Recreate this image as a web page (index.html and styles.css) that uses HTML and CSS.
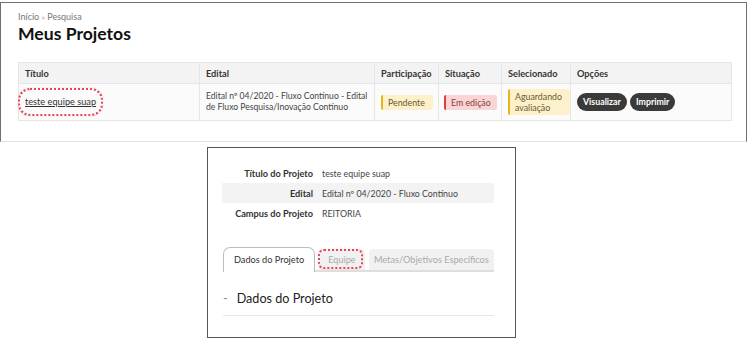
FILE: index.html
```html
<!DOCTYPE html>
<html lang="pt-BR">
<head>
    <meta charset="UTF-8">
    <meta name="viewport" content="width=device-width, initial-scale=1.0">
    <title>Meus Projetos</title>
    <link rel="stylesheet" href="styles.css">
</head>
<body>
    <div class="shot shot-list">
        <div class="breadcrumb">Início <span class="sep">»</span> Pesquisa</div>
        <h1>Meus Projetos</h1>

        <table class="projects">
            <colgroup>
                <col class="col-titulo">
                <col class="col-edital">
                <col class="col-part">
                <col class="col-sit">
                <col class="col-sel">
                <col class="col-opc">
            </colgroup>
            <thead>
                <tr>
                    <th>Título</th>
                    <th>Edital</th>
                    <th>Participação</th>
                    <th>Situação</th>
                    <th>Selecionado</th>
                    <th>Opções</th>
                </tr>
            </thead>
            <tbody>
                <tr>
                    <td class="cell-titulo">
                        <a href="#">teste equipe suap</a>
                        <span class="mark mark-titulo"></span>
                    </td>
                    <td>Edital nº 04/2020 - Fluxo Contínuo - Edital de Fluxo Pesquisa/Inovação Contínuo</td>
                    <td><span class="status alert">Pendente</span></td>
                    <td class="cell-sit"><span class="status error">Em edição</span></td>
                    <td><span class="status alert">Aguardando<br>avaliação</span></td>
                    <td class="cell-opc">
                        <a href="#" class="btn">Visualizar</a>
                        <a href="#" class="btn">Imprimir</a>
                    </td>
                </tr>
            </tbody>
        </table>
    </div>

    <div class="shot shot-detail">
        <dl class="info">
            <div class="info-row">
                <dt>Título do Projeto</dt>
                <dd>teste equipe suap</dd>
            </div>
            <div class="info-row">
                <dt>Edital</dt>
                <dd>Edital nº 04/2020 - Fluxo Contínuo</dd>
            </div>
            <div class="info-row">
                <dt>Campus do Projeto</dt>
                <dd>REITORIA</dd>
            </div>
        </dl>

        <ul class="tabs">
            <li class="tab active">Dados do Projeto</li>
            <li class="tab">Equipe<span class="mark mark-tab"></span></li>
            <li class="tab">Metas/Objetivos Específicos</li>
        </ul>

        <h3 class="section-title"><span class="dash">-</span>Dados do Projeto</h3>
    </div>
</body>
</html>
```

FILE: styles.css
```css
body {
    margin: 0;
    font-family: Lato, "Open Sans", Arial, sans-serif;
    background-color: #fff;
    color: #333;
}
.shot {
    box-sizing: border-box;
    border: 1px solid #707070;
    background-color: #fff;
}
.shot-list {
    width: 747px;
    height: 140px;
    margin-top: 2px;
    padding: 8px 0 0 17px;
    border-bottom-color: #e2e2e2;
}
.breadcrumb {
    font-size: 9px;
    line-height: 12px;
    color: #777;
}
.breadcrumb .sep {
    color: #aaa;
    font-size: 8px;
}
h1 {
    margin: 0;
    font-size: 17.6px;
    line-height: 22px;
    font-weight: 700;
    color: #111;
}
.projects {
    margin-top: 17px;
    width: 713px;
    border-collapse: collapse;
    table-layout: fixed;
    font-size: 8.6px;
}
.col-titulo { width: 181px; }
.col-edital { width: 175px; }
.col-part { width: 64px; }
.col-sit { width: 63px; }
.col-sel { width: 69px; }
.col-opc { width: 161px; }
.projects th,
.projects td {
    border: 1px solid #e6e6e6;
    text-align: left;
    padding: 0 2px 0 6px;
}
.projects th {
    background-color: #f3f3f3;
    height: 20px;
    font-size: 9.2px;
    font-weight: 700;
    color: #333;
}
.projects td {
    background-color: #fbfbfb;
    height: 36px;
    line-height: 11px;
    color: #444;
}
.projects td.cell-sit {
    padding-left: 5px;
}
.cell-titulo {
    position: relative;
}
.cell-titulo a {
    color: #333;
    font-size: 9.2px;
}
.cell-opc {
    white-space: nowrap;
}
.status {
    display: inline-block;
    padding: 2px 8px 2px 5px;
    border-left: 2px solid;
    border-radius: 2px;
    font-size: 8.8px;
    line-height: 11px;
    white-space: nowrap;
}
.status.alert {
    background-color: #fcf1cb;
    border-left-color: #e9b512;
    color: #6b5a2a;
}
.status.error {
    padding-right: 6px;
    background-color: #f9d5d5;
    border-left-color: #e53b3b;
    color: #8a3a3a;
}
.btn {
    display: inline-block;
    background-color: #3a3a3a;
    color: #fff;
    font-weight: 700;
    font-size: 8.8px;
    line-height: 18px;
    padding: 0 6px;
    margin-right: 1px;
    border-radius: 9px;
    text-decoration: none;
}
.mark {
    position: absolute;
    border: 2px dotted #e2475a;
    box-shadow: 0 0 1px #f08a96;
}
.mark-titulo {
    left: -1px;
    top: 4px;
    width: 81px;
    height: 24px;
    border-radius: 12px;
}
.mark-tab {
    left: -1px;
    top: 0;
    width: 41px;
    height: 16px;
    border-radius: 6px;
}

.shot-detail {
    width: 309px;
    height: 191px;
    margin: 5px 0 0 207px;
    padding: 15px 21px 0 14px;
    border-color: #555;
}
.info {
    margin: 0;
    font-size: 8.8px;
}
.info-row {
    display: flex;
    height: 20px;
    align-items: center;
}
.info-row:nth-child(2) {
    background-color: #f3f3f3;
}
.info dt {
    width: 91px;
    padding-right: 9px;
    text-align: right;
    font-size: 9.2px;
    font-weight: 700;
    color: #333;
}
.info dd {
    margin: 0;
    color: #444;
}
.tabs {
    list-style: none;
    margin: 24px 0 0 1px;
    padding: 0;
    display: flex;
    gap: 4px;
    height: 25px;
    border-bottom: 2px solid #dedede;
    box-sizing: border-box;
    font-size: 9.2px;
    white-space: nowrap;
}
.tab {
    position: relative;
    padding: 0 9px;
    line-height: 21px;
    margin-top: 2px;
    background-color: #f1f1f1;
    color: #aaa;
    border-radius: 4px 4px 0 0;
}
.tab.active {
    margin-top: 0;
    padding: 0 10px;
    line-height: 24px;
    height: 24px;
    background-color: #fff;
    color: #333;
    border: 1px solid #bdbdbd;
    border-bottom: none;
    border-radius: 7px 7px 0 0;
}
.tab:last-child {
    flex: 1;
    min-width: 0;
    padding: 0 4px;
    text-align: center;
}
.section-title {
    margin: 19px 0 0 1px;
    padding-bottom: 8px;
    border-bottom: 1px solid #e8e8e8;
    font-size: 12.6px;
    font-weight: 400;
    line-height: 16px;
    color: #222;
}
.section-title .dash {
    color: #888;
    margin: 0 9px 0 0;
}
```
